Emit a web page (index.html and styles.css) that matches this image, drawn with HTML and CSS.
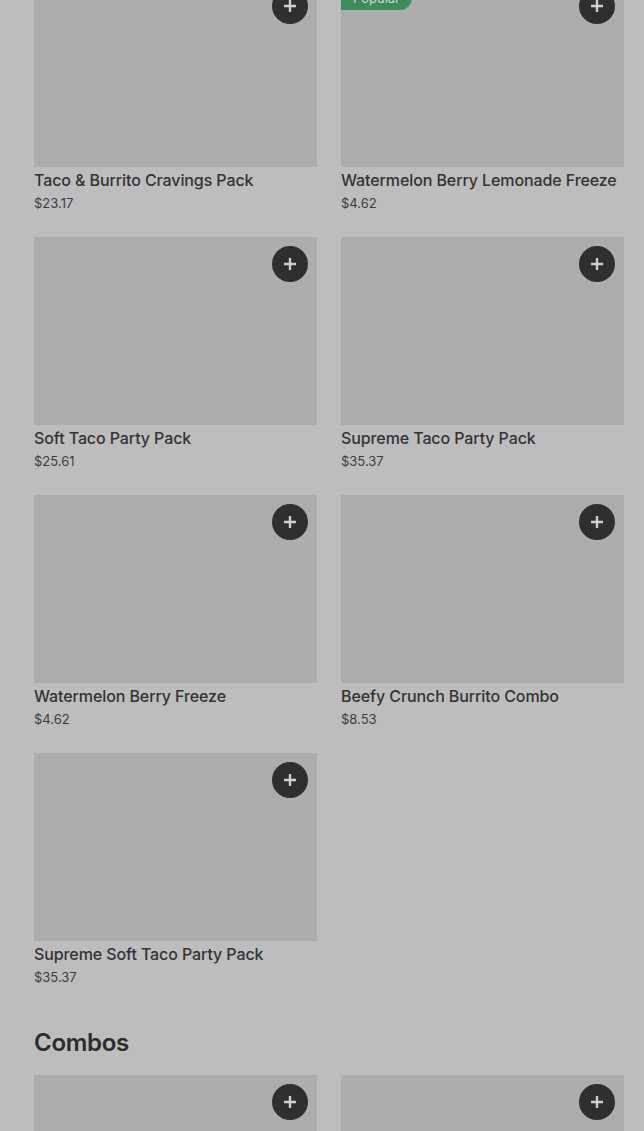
FILE: index.html
```html
<!DOCTYPE html>
<html lang="en">
<head>
  <meta charset="UTF-8">
  <title>Menu</title>
  <link rel="stylesheet" href="styles.css">
</head>
<body>
  <div class="menu">
    <div class="grid">
      <div class="item">
        <div class="thumb"><button class="add"><svg viewBox="0 0 12 12"><path d="M6 0v12M0 6h12"/></svg></button></div>
        <div class="name">Taco &amp; Burrito Cravings Pack</div>
        <div class="price">$23.17</div>
      </div>
      <div class="item">
        <div class="thumb"><span class="badge">Popular</span><button class="add"><svg viewBox="0 0 12 12"><path d="M6 0v12M0 6h12"/></svg></button></div>
        <div class="name">Watermelon Berry Lemonade Freeze</div>
        <div class="price">$4.62</div>
      </div>
      <div class="item">
        <div class="thumb"><button class="add"><svg viewBox="0 0 12 12"><path d="M6 0v12M0 6h12"/></svg></button></div>
        <div class="name">Soft Taco Party Pack</div>
        <div class="price">$25.61</div>
      </div>
      <div class="item">
        <div class="thumb"><button class="add"><svg viewBox="0 0 12 12"><path d="M6 0v12M0 6h12"/></svg></button></div>
        <div class="name">Supreme Taco Party Pack</div>
        <div class="price">$35.37</div>
      </div>
      <div class="item">
        <div class="thumb"><button class="add"><svg viewBox="0 0 12 12"><path d="M6 0v12M0 6h12"/></svg></button></div>
        <div class="name">Watermelon Berry Freeze</div>
        <div class="price">$4.62</div>
      </div>
      <div class="item">
        <div class="thumb"><button class="add"><svg viewBox="0 0 12 12"><path d="M6 0v12M0 6h12"/></svg></button></div>
        <div class="name">Beefy Crunch Burrito Combo</div>
        <div class="price">$8.53</div>
      </div>
      <div class="item">
        <div class="thumb"><button class="add"><svg viewBox="0 0 12 12"><path d="M6 0v12M0 6h12"/></svg></button></div>
        <div class="name">Supreme Soft Taco Party Pack</div>
        <div class="price">$35.37</div>
      </div>
    </div>

    <h2>Combos</h2>
    <div class="grid">
      <div class="item">
        <div class="thumb"><button class="add"><svg viewBox="0 0 12 12"><path d="M6 0v12M0 6h12"/></svg></button></div>
      </div>
      <div class="item">
        <div class="thumb"><button class="add"><svg viewBox="0 0 12 12"><path d="M6 0v12M0 6h12"/></svg></button></div>
      </div>
    </div>
  </div>
</body>
</html>
```

FILE: styles.css
```css
body {
  margin: 0;
  background-color: #bdbdbd;
  font-family: Inter, 'Noto Sans', sans-serif;
  color: #333;
  overflow: hidden;
}
.menu {
  padding: 0 20px 0 34px;
  margin-top: -21px;
}
.grid {
  display: grid;
  grid-template-columns: repeat(2, 1fr);
  column-gap: 24px;
  row-gap: 25px;
}
.thumb {
  position: relative;
  height: 188px;
  background-color: #adadad;
}
.add {
  position: absolute;
  top: 9px;
  right: 9px;
  width: 36px;
  height: 36px;
  border: none;
  border-radius: 50%;
  background-color: #2f2f2f;
  padding: 0;
  display: flex;
  align-items: center;
  justify-content: center;
}
.add svg {
  width: 12px;
  height: 12px;
  stroke: #cdcdcd;
  stroke-width: 2.4;
}
.badge {
  position: absolute;
  top: 7px;
  left: 0;
  height: 24px;
  line-height: 24px;
  padding: 0 12px;
  background-color: #3c8c5c;
  color: #c8d8cc;
  font-size: 13px;
  border-radius: 0 12px 12px 0;
}
.name {
  margin-top: 3px;
  font-size: 16px;
  font-weight: 500;
  line-height: 20px;
  letter-spacing: -0.1px;
  white-space: nowrap;
}
.price {
  margin-top: 4px;
  font-size: 13px;
  line-height: 18px;
  color: #3d3d3d;
}
h2 {
  margin: 43px 0 18px;
  font-size: 24px;
  font-weight: 600;
  line-height: 28px;
  letter-spacing: -0.3px;
  color: #2c2c2c;
}
```
